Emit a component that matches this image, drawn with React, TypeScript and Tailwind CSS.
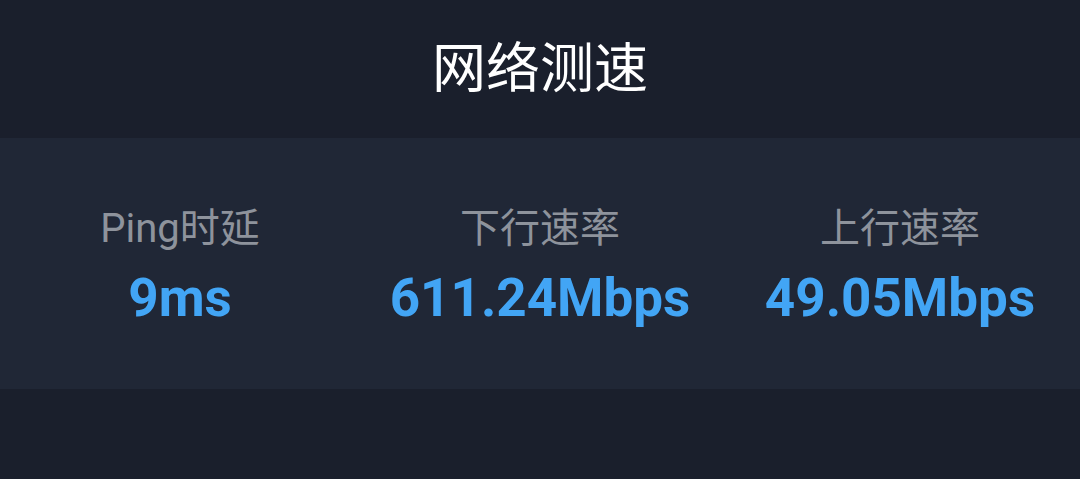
const stats = [
  { label: "Ping时延", value: "9ms" },
  { label: "下行速率", value: "611.24Mbps" },
  { label: "上行速率", value: "49.05Mbps" },
];

export default function App() {
  return (
    <div
      className="flex h-[479px] w-[1080px] flex-col bg-[#1a1f2c]"
      style={{ fontFamily: 'Roboto, "Noto Sans CJK SC", sans-serif' }}
    >
      <header className="flex h-[138px] items-center justify-center pt-[2px]">
        <h1 className="text-[54px] font-normal leading-none text-white">网络测速</h1>
      </header>

      <section className="grid h-[251px] grid-cols-3 bg-[#202736]">
        {stats.map((s) => (
          <div key={s.label} className="flex flex-col items-center justify-center pt-[7px]">
            <span className="text-[40px] leading-none text-[#8e939c]">{s.label}</span>
            <span className="mt-[23px] text-[53px] font-bold leading-none text-[#42a5f5]">
              {s.value}
            </span>
          </div>
        ))}
      </section>
    </div>
  );
}
